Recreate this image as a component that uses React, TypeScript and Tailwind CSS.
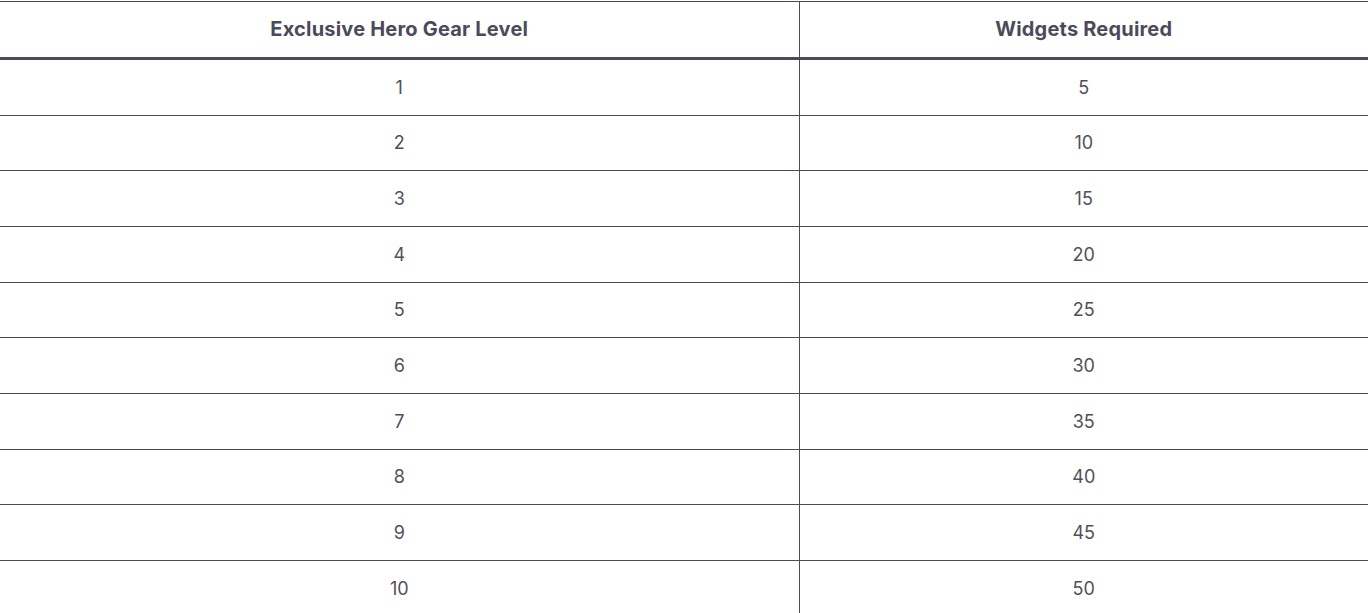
const rows = [
  [1, 5],
  [2, 10],
  [3, 15],
  [4, 20],
  [5, 25],
  [6, 30],
  [7, 35],
  [8, 40],
  [9, 45],
  [10, 50],
]

export default function App() {
  return (
    <div className="min-h-screen bg-white pt-px font-['Inter',sans-serif]">
      <table className="w-full table-fixed border-collapse">
        <colgroup>
          <col className="w-[799px]" />
          <col />
        </colgroup>
        <thead>
          <tr className="h-[57px] border-t border-b-[3px] border-[#4b4a58]">
            <th className="border-r border-[#4b4a58] pb-[2px] text-center text-[20px] font-bold tracking-[0.2px] text-[#4b4a5a]">
              Exclusive Hero Gear Level
            </th>
            <th className="pb-[2px] text-center text-[20px] font-bold tracking-[0.2px] text-[#4b4a5a]">
              Widgets Required
            </th>
          </tr>
        </thead>
        <tbody>
          {rows.map(([level, widgets], i) => (
            <tr
              key={level}
              className={`border-b border-[#4b4a58] ${i === 0 ? 'h-[56.5px]' : 'h-[55.7px]'}`}
            >
              <td className="border-r border-[#4b4a58] text-center text-[18px] text-[#50505a]">
                {level}
              </td>
              <td className="text-center text-[18px] text-[#50505a]">{widgets}</td>
            </tr>
          ))}
        </tbody>
      </table>
    </div>
  )
}
